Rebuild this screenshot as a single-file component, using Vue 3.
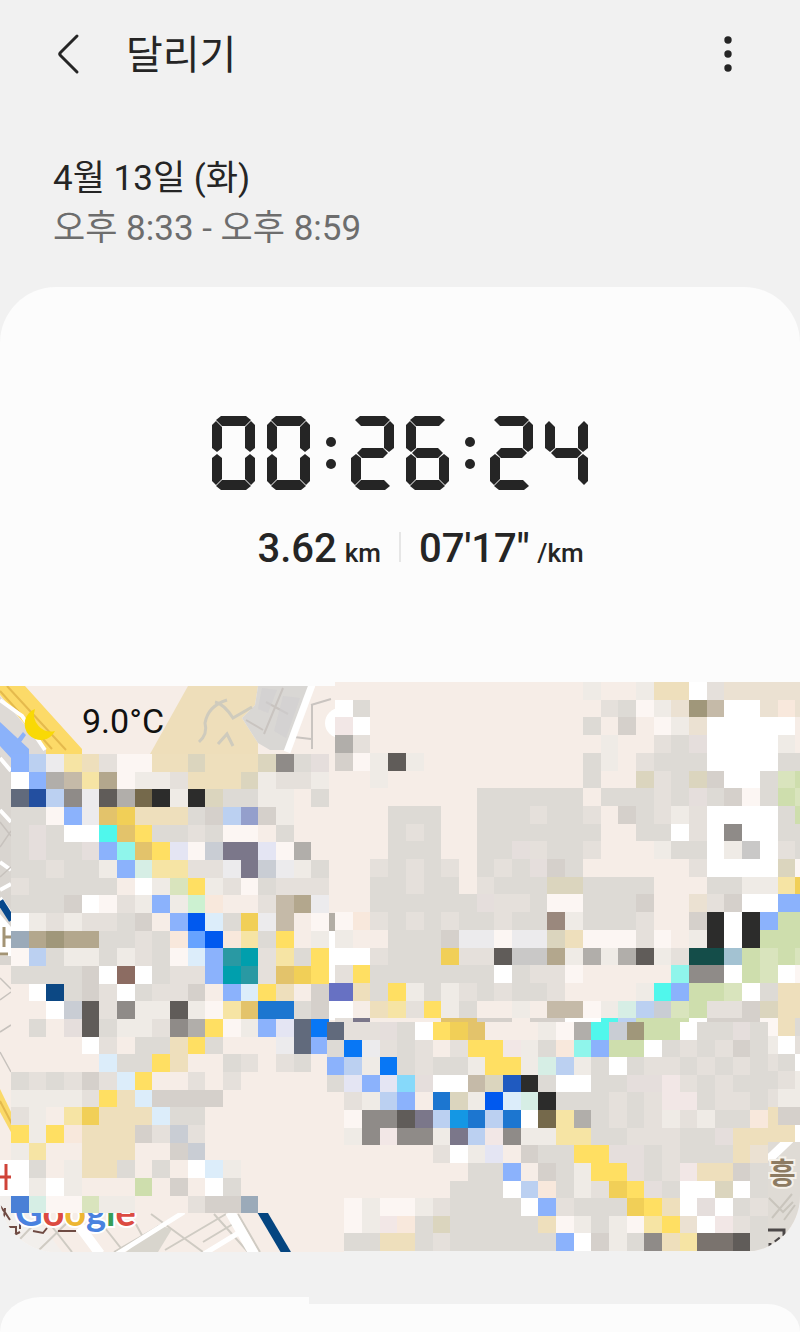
<script setup>
const segmentsByDigit = {
  0: 'abcdef', 1: 'bc', 2: 'abdeg', 3: 'abcdg', 4: 'bcfg',
  5: 'acdfg', 6: 'acdefg', 7: 'abc', 8: 'abcdefg', 9: 'abcdfg'
}
const elapsed = '00:26:24'

const palette = {
  '.': '#f6ede7', a: '#dddad5', b: '#e5e0db', c: '#efebe6', d: '#d5d0cb', w: '#ffffff',
  x: '#fcf6f3', y: '#ffdf62', Y: '#f1cf57', z: '#e3c36b', t: '#f6e4a4', s: '#eedfbc',
  S: '#dbd5be', k: '#2c2c2b', K: '#605c59', g: '#8f8b88', G: '#b1aeaa', o: '#a0977a',
  O: '#b3a78d', N: '#c5baa8', M: '#75694b', J: '#c9c8c7', W: '#7a736e', C: '#c9cdd4',
  V: '#9baab9', 1: '#0059ef', 2: '#0877f5', 3: '#8bb2fc', 4: '#bbd0f1', 5: '#dcedfa',
  6: '#1c76d0', 7: '#6771c3', 8: '#234fa0', 9: '#0c4884', A: '#66a3ff', B: '#1f5ac0',
  D: '#4a80d6', F: '#1497e4', q: '#50f7ec', Q: '#8ff5eb', r: '#d6eee5', e: '#cedead',
  E: '#d9e4bd', i: '#ccf1d1', p: '#e5dedc', P: '#f2e7e6', h: '#ecebed', H: '#e4e5f3',
  m: '#009fad', n: '#2999a3', u: '#7b778a', U: '#616a7c', v: '#8c6c62', R: '#9a887d',
  T: '#144d49', L: '#a3c2d2', f: '#86d9fa', l: '#f8e8dc', Z: '#ebe1d2', j: '#949fcc'
}

const blocks = [
  {
    x: 335, y: 0, w: 17.7, h: 17.7, rows: [
      '..............c..csswbZZZZZ',
      'wa.............baxcZoNwwZlZ',
      'Pw............a.d.xcZwwwww.',
      'Gb.............c..bapwwwwc.',
      'dxcKc.........ac.baaawwwwaa',
      '..c...........a..SbaSdwwaEe',
      '........aaaaaa.aaabapadxaeE',
      '...aaa..aaabaab.dabcbwwwwae',
      '...aba..aaaaaaa..aawbwgwwaa',
      '...aaa..aapbaab...caawcJwba',
      '..babab.abapda......bwwwwSx',
      '..aabaa.baaaSSaaaa...aacctY',
      '..aaaaaapbbaxxaaad..Zbdww33',
      'xlbababaabaaRcaaab..dkwk3ee',
      'c..aaadhhxhhSsxxxbx.ckwkeee',
      'wwbaaaYbbKJJOcGcGKcbTTLeEeE',
      'byaaaaaaawabbx.....QggweEwx',
      '7saycacbabaab....cq3eeEwass',
      'w.stbyca..c.NNxcr4CEebbdSss',
      'bu....zzdd.ddwwq4eeewdddxsa',
      '________________________cwb',
      '________________________baw',
      '________________________abc',
      '________________________bcc',
      '________________________sdd',
      '________________________ssw'
    ]
  },
  {
    x: 11, y: 72, w: 17.67, h: 17.67, rows: [
      '34htsbxxssSsssSgap',
      'w3GNtOxccbsssScbbc',
      'U84ghKGMkckSaacc.a',
      'aax3hzYsssad4jdc..',
      'apawwqzyaabaxx.a..',
      'apaap3QzyHxCuuHxG.',
      'aabaac3rttbbhuChca',
      'baaaaa.wcEycbxabbb',
      'aaadwxbc3cil..bNOh',
      'wcbcbbad.315aYhN.x',
      'VOoOOaabalA1ltay.c',
      'x4accacbax53nmbtay',
      'aaaadwvwabb3mnbzYy',
      '.w9adbwabbd.35ys.d',
      '..wCKbgccKcxtz66ad',
      '.a.pKaccbgGyxc3HU2',
      '....wb.aasya...hU3',
      '.....5aays..ab.ba.',
      'ababdb5y..b.b.....',
      'ccccbys5dddd......',
      'bc.tYsss5aa.......',
      'ycylsssdbCb.......',
      'ct..sss..dC.......',
      'wa.cssa.a.w5c.....',
      'wcwc...e.d.wa.....',
      'DrxxEcc...bddV....'
    ]
  },
  {
    x: 326.6, y: 340, w: 17.65, h: 17.62, rows: [
      'UbbpawyYz...cxGqCoeewaapa',
      'a2hbab.byyPcalQ3eewababda',
      '34c2abaacyycr4cawabbababa',
      'aH3HfpwwNSBkawwaappPbabaa',
      '.bc43.6Sc15rkaaababPPabba',
      '.xggKu4F646wMtGababcbcaal',
      '.cgPggcu4Pgccttaabbbaapss',
      '......bwcH.daayyppabaaasZ',
      '........aa3.dacyypabPssda',
      '.......aaaw4lacbYypawwSwa',
      '.xcxxcbaaaaw3baaaYyswpwab',
      '.xcPlaSaaaaasxcacxtyZwPba',
      '.aassabaaaaaa3wdcagstWWKa'
    ]
  }
]

const tiles = blocks.flatMap(({ x, y, w, h, rows }) =>
  rows.flatMap((row, r) => {
    const out = []
    let start = 0
    for (let c = 1; c <= row.length; c++) {
      if (row[c] === row[start]) continue
      if (row[start] !== '_') {
        const left = Math.round(x + start * w)
        const top = Math.round(y + r * h)
        out.push({
          x: left,
          y: top,
          width: Math.round(x + c * w) - left,
          height: Math.round(y + (r + 1) * h) - top,
          fill: palette[row[start]]
        })
      }
      start = c
    }
    return out
  })
)
</script>

<template>
  <main class="page">
    <header class="bar">
      <button class="icon-button back" type="button" aria-label="뒤로">
        <svg width="24" height="42" viewBox="0 0 24 42" aria-hidden="true">
          <path d="M21 3 4.500 19.500q-1.500 1.500 0 3L21 39" fill="none" stroke="#252525" stroke-width="3" stroke-linecap="round" />
        </svg>
      </button>
      <h1>달리기</h1>
      <button class="icon-button more" type="button" aria-label="더보기">
        <svg width="8" height="36" viewBox="0 0 8 36" aria-hidden="true" fill="#252525">
          <circle cx="4" cy="4" r="3.700" /><circle cx="4" cy="18" r="3.700" /><circle cx="4" cy="32" r="3.700" />
        </svg>
      </button>
    </header>

    <section class="when">
      <p class="date">4월 13일 (화)</p>
      <p class="hours">오후 8:33 - 오후 8:59</p>
    </section>

    <section class="workout">
      <div class="summary">
        <time class="timer" datetime="PT26M24S" :aria-label="elapsed">
          <template v-for="(ch, i) in elapsed" :key="i">
            <span v-if="ch === ':'" class="colon"><i></i><i></i></span>
            <span v-else class="digit"><i v-for="s in segmentsByDigit[ch]" :key="s" :class="'seg-' + s"></i></span>
          </template>
        </time>
        <div class="stats">
          <p class="distance">3.62 <small>km</small></p>
          <span class="rule"></span>
          <p class="pace">07'17" <small>/km</small></p>
        </div>
      </div>

      <div class="map">
        <svg class="map-art" viewBox="0 0 800 570" role="img" aria-label="지도">
          <rect width="800" height="570" fill="#f6ede7" />
          <!-- north-west district -->
          <path d="M188 4H258L255 23 242 36 258 61V72H150Z" fill="#eedeba" />
          <path d="M258 4H311L287 68H270L258 61 242 36 255 23Z" fill="#d9d7d4" />
          <g fill="none" stroke="#cfcbbd" stroke-width="3">
            <path d="M199 60q9-8 6-19 3-17 22-23M215 20q9 2 18 16l19-11M218 62l9-10 6 12" />
            <path d="M283 6 264 52M266 20l22 12M246 38l17 10M311 23l20-6M312 23v44M294 55l17 2" stroke="#c9c4c0" stroke-width="2" />
          </g>
          <path d="M262 6l15 2-9 23-10-4Z M283 14l17 2-14 40-12-7Z" fill="#d0cfd0" opacity=".6" />
          <path d="M312 3 287 70" stroke="#fff" stroke-width="7" />
          <circle cx="340" cy="41" r="15" fill="#fff" />
          <path d="M0 14 46 68V100L0 90Z" fill="#dedad6" />
          <path d="M0 4H25L82 67V72H46V67L0 13Z" fill="#fcda68" />
          <path d="M7 4 66 68M0 9l52 58" stroke="#e5ba4d" stroke-width="2" />
          <path d="M0 18 22 34 45 68" fill="none" stroke="#fff" stroke-width="4" />
          <path d="M0 40 29 67V90H11V76L0 64ZM15 60 23 50 26 53 19 63Z" fill="#8bb2fa" />
          <!-- west edge -->
          <path d="M0 73 11 87V283H0Z" fill="#d9d5d0" />
          <path d="M0 76 11 89M0 128l11 12M0 180l11 8M0 208l11-6M0 216l11 16" stroke="#fff" stroke-width="4" />
          <path d="M0 140l11 14M0 165l11-16M0 195l11-10M0 296l11 11M0 318l11-8M0 350l11-7M0 370l11 20" stroke="#c7c2bd" stroke-width="1.500" />
          <path d="M0 219 12 238" stroke="#07488c" stroke-width="7" />
          <path d="M0 232 11 245V274H0Z" fill="#fff" />
          <path d="M4 245v20M4 255h7M0 272h8" stroke="#a39475" stroke-width="3" />
          <path d="M0 407 12 432V452L0 430Z" fill="#fad968" />
          <path d="M0 419 12 442" stroke="#e3b94d" stroke-width="2" />
          <path d="M0 478H12V516H0Z" fill="#fff" />
          <path d="M6 482v26M0 495h11" stroke="#cf4338" stroke-width="3" />
          <!-- southern streets -->
          <path d="M0 514H20L62 570H0Z" fill="#f2efec" />
          <path d="M126 570 158 543 172 547 158 570Z" fill="#d8d5cd" />
          <g fill="none" stroke="#cfcbc3" stroke-width="2">
            <path d="M20 557 44 532M39 568 72 536M50 542 72 570M94 532 124 570M114 570 180 532M151 532l52 38M165 568 226 532M214 532 248 570M238 532 260 570M203 560l30-18M132 535l12 22" />
          </g>
          <path d="M80 545 100 572M230 530 254 572" stroke="#fff" stroke-width="10" />
          <path d="M117 572 184 530M204 572 240 550" stroke="#fff" stroke-width="5" />
          <path d="M261 528 287 572" stroke="#044580" stroke-width="9" />
          <path d="M0 524q5 6 10 14M5 526q0 9-4 12M8 545l8 0v6M12 554l8-4M20 532v15M33 549l10 2 4-5M58 549l18 0" fill="none" stroke="#6f4b43" stroke-width="2" />
          <text class="brand" x="15" y="544"><tspan fill="#4a82df">G</tspan><tspan fill="#dc4b42">o</tspan><tspan fill="#edb632">o</tspan><tspan fill="#4a82df">g</tspan><tspan fill="#369e58">l</tspan><tspan fill="#dc4b42">e</tspan></text>
          <!-- east edge -->
          <path d="M768 459H800V570H768Z" fill="#dfdbd5" />
          <path d="M768 478 790 457" stroke="#fff" stroke-width="9" />
          <path d="M769 516l14 14 10-10M772 536l20-24M784 538l11-15" fill="none" stroke="#c9c5bd" stroke-width="2" />
          <text class="place" x="769" y="502">흥</text>
          <path d="M768 548H784V554M780 556l-5 4M770 561v5" fill="none" stroke="#4c4848" stroke-width="3" />
          <g shape-rendering="crispEdges">
            <rect x="0" y="0" width="335" height="4" fill="#fcfcfc" />
            <rect v-for="(t, i) in tiles" :key="i" v-bind="t" />
            <rect x="329" y="231" width="6" height="18" fill="#b2ada5" />
            <rect x="329" y="249" width="6" height="52" fill="#fff" />
            <rect x="329" y="301" width="6" height="18" fill="#6771c3" />
            <rect x="329" y="319" width="6" height="19" fill="#fff" />
            <rect x="344" y="569" width="424" height="1" fill="#f1f1f1" />
          </g>
          <path d="M35 27A16 16 0 1 0 55 49 17 17 0 0 1 35 27Z" fill="#f9d905" />
        </svg>
        <p class="temperature">9.0°C</p>
      </div>
    </section>

    <section class="next"><div class="next-start"></div><div class="next-end"></div></section>
  </main>
</template>

<style>
body { background: #f1f1f1; }
</style>

<style scoped>
.page {
  min-height: 100vh;
  display: flex;
  flex-direction: column;
  background: #f1f1f1;
  color: #252525;
  font-family: Roboto, "Noto Sans CJK KR", sans-serif;
}
h1, p { margin: 0; font-weight: 400; }
.bar {
  height: 108px;
  padding: 0 56px;
  display: flex;
  align-items: center;
}
.icon-button {
  display: flex;
  align-items: center;
  padding: 0;
  border: 0;
  background: none;
}
.back { width: 70px; height: 56px; }
.more { width: 32px; height: 56px; justify-content: center; margin-left: auto; }
h1 { padding-top: 4px; font-size: 40px; line-height: 56px; }
.when { padding: 46px 53px 33px; font-size: 35px; line-height: 50px; }
.hours { color: #6d6d6d; }
.workout {
  border-radius: 56px;
  overflow: hidden;
  background: #fcfcfc;
}
.summary { padding: 129px 0 101px; }
.timer { display: flex; justify-content: center; height: 74px; }
.digit { display: grid; width: 43px; height: 74px; }
.digit + .digit { margin-left: 12px; }
.digit i { grid-area: 1 / 1; background: #252525; }
.seg-a { clip-path: polygon(9px 0, 34px 0, 39px 4px, 33px 10px, 10px 10px, 4px 4px); }
.seg-b { clip-path: polygon(39px 5px, 43px 9px, 43px 32px, 38px 36px, 33px 32px, 33px 11px); }
.seg-c { clip-path: polygon(38px 38px, 43px 42px, 43px 65px, 39px 69px, 33px 63px, 33px 42px); }
.seg-d { clip-path: polygon(4px 70px, 10px 64px, 33px 64px, 39px 70px, 34px 74px, 9px 74px); }
.seg-e { clip-path: polygon(5px 38px, 10px 42px, 10px 63px, 4px 69px, 0 65px, 0 42px); }
.seg-f { clip-path: polygon(4px 5px, 10px 11px, 10px 32px, 5px 36px, 0 32px, 0 9px); }
.seg-g { clip-path: polygon(6px 37px, 11px 32px, 32px 32px, 37px 37px, 32px 42px, 11px 42px); }
.colon {
  width: 41px;
  display: flex;
  flex-direction: column;
  align-items: center;
  justify-content: center;
  gap: 12px;
}
.colon i { width: 10px; height: 10px; border-radius: 50%; background: #252525; }
.stats {
  margin-top: 31px;
  display: grid;
  grid-template-columns: 1fr 2px 1fr;
  column-gap: 18px;
  align-items: center;
}
.stats p { font-size: 40px; line-height: 56px; font-weight: 500; white-space: nowrap; }
.stats small { font-size: 26px; margin-left: -2px; }
.distance { text-align: right; }
.rule { height: 30px; margin-bottom: 8px; background: #e6e6e6; }
.map { position: relative; }
.map-art { display: block; width: 100%; height: auto; }
.brand { font: 700 38px Lato, sans-serif; stroke: #fff; stroke-width: 4px; paint-order: stroke; }
.place { font: 700 29px "Noto Sans CJK KR", sans-serif; fill: #8d7b62; stroke: #f5f1ea; stroke-width: 4px; paint-order: stroke; }
.temperature {
  position: absolute;
  left: 82px;
  top: 19px;
  font-size: 34px;
  line-height: 40px;
  color: #111;
}
.next { flex: 1; min-height: 35px; margin-top: 45px; display: flex; }
.next div { background: #fcfcfc; }
.next-start { width: 309px; border-top-left-radius: 56px 48px; }
.next-end { flex: 1; margin-top: 7px; border-top-right-radius: 56px 48px; }
</style>
